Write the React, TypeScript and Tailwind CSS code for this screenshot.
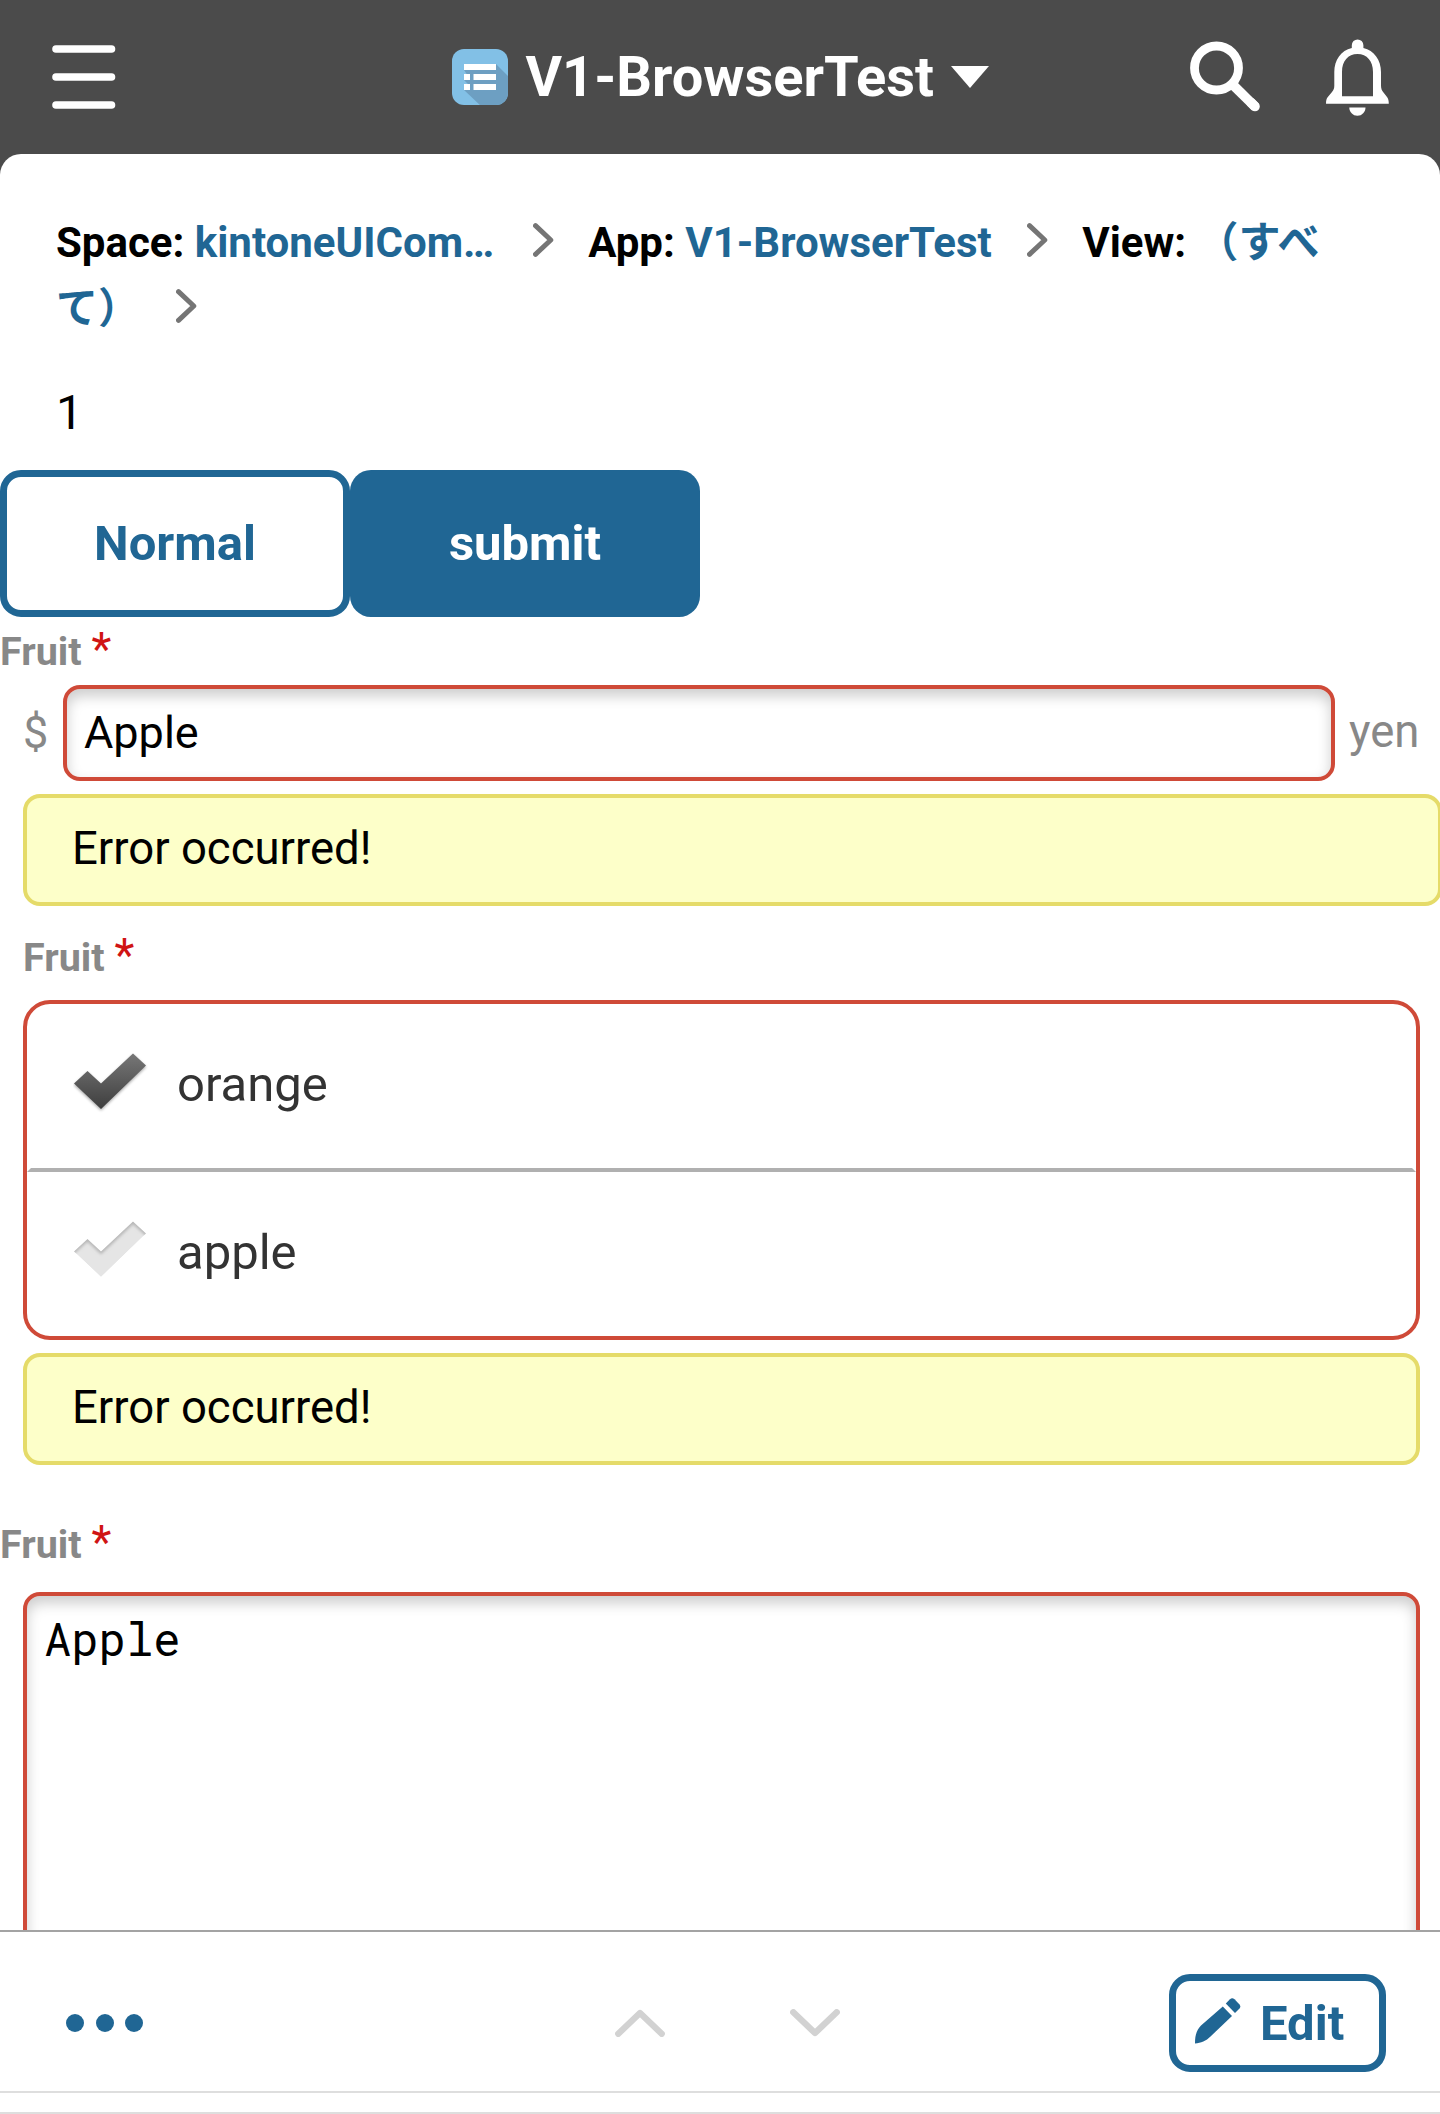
import React from "react";

function AppIcon() {
  return (
    <svg width="56" height="56" viewBox="0 0 56 56" className="shrink-0">
      <defs>
        <clipPath id="tile">
          <rect width="56" height="56" rx="12" />
        </clipPath>
      </defs>
      <g clipPath="url(#tile)">
        <rect width="56" height="56" fill="#82c0e6" />
        <path d="M44 15L58 29V58H30L12 41L18 37L12 31L16 27L12 21Z" fill="#6d9fc2" />
        <path d="M12 15h32v6H12zM12 25h6v6h-6zM21.5 25H44v6H21.5zM12 35h6v6h-6zM21.5 35H44v6H21.5z" fill="#fff" />
      </g>
    </svg>
  );
}

function Chevron({ className }: { className?: string }) {
  return (
    <svg width="21" height="34" viewBox="0 0 21 34" className={"inline-block align-baseline " + (className ?? "")}>
      <path d="M2.5 2.7L17.8 17L2.5 31.3" fill="none" stroke="#757575" strokeWidth="5" strokeLinecap="round" strokeLinejoin="round" />
    </svg>
  );
}

function Header() {
  return (
    <header className="flex h-[154px] shrink-0 items-center bg-[#4b4b4b] text-white">
      <svg width="64" height="64" viewBox="0 0 64 64" className="ml-[52px]">
        <path d="M4 4H59.5M4 32H59.5M4 60H59.5" stroke="#fff" strokeWidth="7.6" strokeLinecap="round" />
      </svg>
      <div className="ml-[335.500px] flex items-center">
        <AppIcon />
        <span className="ml-[18px] text-[56px] leading-[66px] font-bold whitespace-nowrap">V1-BrowserTest</span>
        <svg width="38" height="22" viewBox="0 0 38 22" className="ml-[17px]">
          <path d="M0 0H38L19 22Z" fill="#fff" />
        </svg>
      </div>
      <svg width="72" height="72" viewBox="0 0 72 72" className="mr-[65px] ml-auto">
        <circle cx="27.5" cy="27" r="22" fill="none" stroke="#fff" strokeWidth="8.8" />
        <path d="M42 42L66.5 66.2" stroke="#fff" strokeWidth="9.6" />
        <path d="M62 61.5L66 65.5" stroke="#fff" strokeWidth="9.6" strokeLinecap="round" />
      </svg>
      <svg width="63" height="77" viewBox="0 0 63 77" className="mr-[51px]">
        <path
          fill="#fff"
          fillRule="evenodd"
          d="M25.8 9V6.2a5.8 5.8 0 0 1 11.6 0V9C48 11.5 55 21 55 33v13.5c0 3 .8 5 2.5 7L61 58c1.200 1.800 1.800 3.500 1.800 6.700H0c0-3.200.5-5 1.800-6.700L6 53c1.700-2.200 2.300-3.500 2.300-6.500V33C8.300 21 15 11.500 25.800 9ZM16 57.300H47V33c0-11-6-18-15.500-18S16 22 16 33Z"
        />
        <path d="M23.300 68.500H39.500C39.500 73 36 76.800 31.400 76.800S23.300 73 23.300 68.500Z" fill="#fff" />
      </svg>
    </header>
  );
}

function Breadcrumb() {
  return (
    <nav className="mt-[56px] h-[132px] shrink-0 pr-[84px] pl-[56px] text-[42px] leading-[66px] font-bold text-black">
      <span>Space:</span> <a className="text-[#206694]">kintoneUICom…</a>
      <Chevron className="mr-[34px] ml-[39px]" />
      <span>App:</span> <a className="text-[#206694]">V1-BrowserTest</a>
      <Chevron className="mr-[34.500px] ml-[35px]" />
      <span>View:</span>{" "}
      <a className="text-[#206694]">
        <span>（すべ</span>
        <br />
        <span>て）</span>
      </a>
      <Chevron className="ml-[36px]" />
    </nav>
  );
}

function FieldLabel({ className }: { className: string }) {
  return (
    <div className={"flex h-[48px] items-center text-[39.500px] leading-[48px] font-bold text-[#888] " + className}>
      Fruit<span className="mb-[7px] ml-[10px] text-[46px] font-normal text-[#d01414]">*</span>
    </div>
  );
}

function ErrorBox({ className }: { className: string }) {
  return (
    <div className={"flex h-[112px] shrink-0 items-center rounded-[17px] border-4 border-[#e5db69] bg-[#fdffc9] pb-[2px] pl-[45px] text-[45.500px] text-black " + className}>
      Error occurred!
    </div>
  );
}

function Check({ on }: { on: boolean }) {
  const shape = "M1 31.5L14.500 19L28 31.500L60 1.500L73 13.500L28 57Z";
  return (
    <svg width="76" height="62" viewBox="0 0 76 62" className="mb-[7px]">
      <defs>
        <linearGradient id="checkOn" x1="0" y1="0" x2="0" y2="1">
          <stop offset="0" stopColor="#777" />
          <stop offset="1" stopColor="#3e3e3e" />
        </linearGradient>
        <clipPath id="checkClip">
          <path d={shape} />
        </clipPath>
        <filter id="checkBlur" x="-20%" y="-20%" width="140%" height="140%">
          <feGaussianBlur stdDeviation="1.600" />
        </filter>
      </defs>
      {on ? (
        <>
          <path d={shape} transform="translate(0 1.500)" fill="#000" opacity=".35" filter="url(#checkBlur)" />
          <path d={shape} fill="url(#checkOn)" />
        </>
      ) : (
        <g clipPath="url(#checkClip)">
          <path d={shape} fill="#e5e5e5" />
          <path d="M-1 33L14.500 19L28 31.500L60 1.500L75 15" fill="none" stroke="#b5b5b5" strokeWidth="4" filter="url(#checkBlur)" />
        </g>
      )}
    </svg>
  );
}

function Option({ label, on }: { label: string; on: boolean }) {
  return (
    <div className="flex h-[164px] items-center pl-[46px] text-[49px] text-[#333]">
      <Check on={on} />
      <span className="mb-[2px] ml-[28px]">{label}</span>
    </div>
  );
}

function Footer() {
  return (
    <footer className="flex h-[184px] shrink-0 flex-col border-t-2 border-[#a3a3a3] bg-white">
      <div className="flex h-[161px] items-center border-b-2 border-[#dedede] pt-[23px]">
        <div className="ml-[66px] flex gap-[11.500px]">
          <i className="size-[18px] rounded-full bg-[#206694]" />
          <i className="size-[18px] rounded-full bg-[#206694]" />
          <i className="size-[18px] rounded-full bg-[#206694]" />
        </div>
        <svg width="50" height="28" viewBox="0 0 50 28" className="ml-[472px]">
          <path d="M3.300 24.700L25 4L46.700 24.700" fill="none" stroke="#d2d2d2" strokeWidth="6.400" strokeLinecap="round" strokeLinejoin="round" />
        </svg>
        <svg width="50" height="28" viewBox="0 0 50 28" className="ml-[125px]">
          <path d="M3.300 3.300L25 24L46.700 3.300" fill="none" stroke="#d2d2d2" strokeWidth="6.400" strokeLinecap="round" strokeLinejoin="round" />
        </svg>
        <button className="mr-[54px] ml-auto flex h-[98px] w-[217px] items-center rounded-[21px] border-[7px] border-[#206694] pl-[19px] text-[49px] font-bold text-[#206694]">
          <svg width="46" height="46" viewBox="0 0 46 46" className="mb-[4px]">
            <path d="M0 45.500C0 37 1.500 32.500 6 27.500L27.800 8.500L37 18L15.500 38.500C11 43 6 45 0 45.500Z" fill="#206694" />
            <path d="M30.800 5.500L35 1.200Q37.200-.8 39.500 1.300L44.300 6.200Q46.200 8.400 44.500 10.500L40 15Z" fill="#206694" />
          </svg>
          <span className="mt-[1px] ml-[19px]">Edit</span>
        </button>
      </div>
      <div className="mt-auto h-[2px] bg-[#dedede]" />
    </footer>
  );
}

export default function App() {
  return (
    <div className="flex h-[2114px] w-[1440px] flex-col overflow-hidden bg-[#4b4b4b] font-[Roboto,'Noto_Sans_CJK_JP',sans-serif]">
      <Header />
      <main className="flex min-h-0 flex-1 flex-col overflow-hidden rounded-t-[21px] bg-white">
        <Breadcrumb />
        <div className="mt-[41px] pl-[56px] text-[48px] leading-[60px] text-black">1</div>
        <div className="mt-[27px] flex text-[49px] font-bold">
          <button className="h-[147px] w-[350px] shrink-0 rounded-[21px] border-[7px] border-[#206694] bg-white text-[#206694]">Normal</button>
          <button className="h-[147px] w-[350px] shrink-0 rounded-[21px] bg-[#206694] text-white">submit</button>
        </div>
        <FieldLabel className="mt-[11px]" />
        <div className="mt-[9px] flex h-[96px] shrink-0 items-center text-[45px] text-[#888]">
          <span className="w-[63px] pl-[23px]">$</span>
          <div className="flex h-[96px] w-[1272px] items-center rounded-[17px] border-4 border-[#cf4a38] bg-white pl-[17px] text-black shadow-[inset_0_7px_14px_#00000033]">Apple</div>
          <span className="mb-[1px] ml-[14px] text-[45.500px]">yen</span>
        </div>
        <ErrorBox className="mt-[13px] ml-[23px] w-[1419px]" />
        <FieldLabel className="mt-[28px] pl-[23px]" />
        <div className="mt-[18px] mr-[20px] ml-[23px] h-[340px] shrink-0 rounded-[27px] border-4 border-[#cf4a38]">
          <Option label="orange" on />
          <svg width="1389" height="4" viewBox="0 0 1389 4" className="block">
            <path d="M0 4L4 0H1385L1389 4Z" fill="#b0b0b0" />
          </svg>
          <Option label="apple" on={false} />
        </div>
        <ErrorBox className="mt-[13px] mr-[20px] ml-[23px]" />
        <FieldLabel className="mt-[56px]" />
        <div className="mt-[23px] mr-[20px] ml-[23px] h-[450px] shrink-0 rounded-[17px] border-4 border-[#cf4a38] bg-white pt-[12px] pl-[17px] font-['Roboto_Mono','DejaVu_Sans_Mono',monospace] text-[45.500px] leading-[60px] text-black shadow-[inset_0_7px_14px_#00000033]">
          Apple
        </div>
      </main>
      <Footer />
    </div>
  );
}
